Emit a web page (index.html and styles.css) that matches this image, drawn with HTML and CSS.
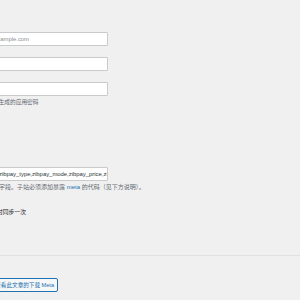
FILE: index.html
```html
<!DOCTYPE html>
<html lang="zh-CN">
<head>
  <meta charset="UTF-8">
  <title>同步设置</title>
  <link rel="stylesheet" href="styles.css">
</head>
<body>

<div class="wrap">
  <div class="form">
    <input type="text" class="field" placeholder="example.com">
    <input type="text" class="field gap">
    <input type="password" class="field gap">
    <p class="desc">页生成的应用密码</p>

    <input type="text" class="field meta-fields" value="zibpay_type,zibpay_mode,zibpay_price,zibpay_down">
    <p class="desc desc-wide">义字段。子站必须添加暴露 <code>meta</code> 的代码（见下方说明）。</p>

    <label class="check">时同步一次</label>
  </div>

  <hr class="sep">

  <button class="button">查看此文章的下载 Meta</button>
</div>

</body>
</html>
```

FILE: styles.css
```css
html, body {
  margin: 0;
  padding: 0;
  background: #f0f0f1;
  overflow: hidden;
}

body {
  font-family: "Liberation Sans", "Noto Sans CJK SC", sans-serif;
  font-size: 5.8px;
  color: #1d2327;
}

.wrap {
  padding-top: 32px;
  margin-left: -9px;
}

.form {
  width: 117px;
}

.field {
  display: block;
  box-sizing: border-box;
  width: 100%;
  height: 14px;
  margin: 0;
  padding: 0;
  text-indent: 2px;
  border: 1px solid #c9cacc;
  border-radius: 1px;
  background: #fff;
  font-family: "Liberation Sans", sans-serif;
  font-size: 5.9px;
  color: #2c3338;
}

.field::placeholder {
  color: #8c8f94;
}

.gap {
  margin-top: 11px;
}

.meta-fields {
  margin-top: 61px;
  text-indent: 7px;
}

.desc {
  margin: 2px 0 0 2px;
  line-height: 8px;
  font-size: 5.7px;
  color: #646970;
  white-space: nowrap;
}

.desc-wide {
  font-size: 6px;
}

.desc code {
  font-family: inherit;
  color: #2271b1;
}

.check {
  display: block;
  margin: 17px 0 0 6px;
  line-height: 8px;
  color: #1d2327;
}

.sep {
  margin: 39px 0 0;
  border: 0;
  border-top: 1px solid #e0e0e2;
}

.button {
  display: block;
  margin-top: 22px;
  height: 14px;
  padding: 0 3px 0 1px;
  border: 1px solid #2271b1;
  border-radius: 2px;
  background: #f6f7f7;
  font-family: "Liberation Sans", "Noto Sans CJK SC", sans-serif;
  font-size: 5.6px;
  color: #2271b1;
  white-space: nowrap;
  width: 67px;
  text-align: right;
}
```
